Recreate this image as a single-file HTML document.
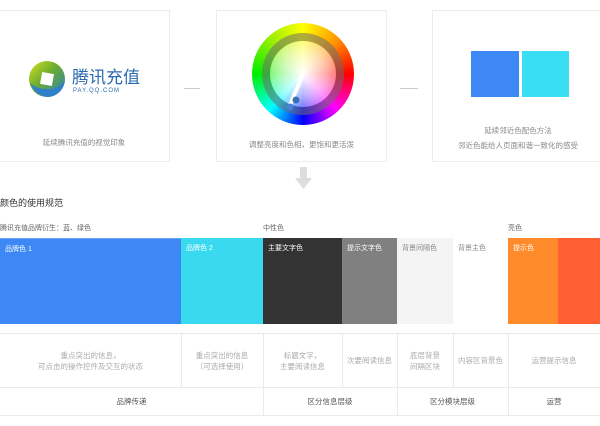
<!DOCTYPE html>
<html><head><meta charset="utf-8"><style>
*{margin:0;padding:0;box-sizing:border-box}
body{width:600px;height:426px;background:#fff;position:relative;overflow:hidden;font-family:"Liberation Sans","Noto Sans CJK SC",sans-serif;color:#999}
.a{position:absolute}
.card{position:absolute;top:10px;height:152px;border:1px solid #ececec;background:#fff}
.cap{position:absolute;left:0;right:0;text-align:center;font-size:7.5px;color:#888;line-height:15px}
.bar{position:absolute;top:238px;height:86px;font-size:7px;color:#fff;padding:5px 5px}
.vl{position:absolute;width:1px;background:#eaeaea}
.d{position:absolute;top:334px;height:53px;display:flex;align-items:center;justify-content:center;text-align:center;font-size:7.5px;line-height:11px;color:#aaa}
.l{position:absolute;top:388px;height:27px;display:flex;align-items:center;justify-content:center;font-size:7.5px;color:#555}
</style></head><body>
<div class="card" style="left:-2px;width:172px">
  <svg class="a" style="left:28px;top:48px" width="40" height="40" viewBox="0 0 40 40">
    <defs><linearGradient id="g1" x1="0" y1="0" x2="1" y2="1"><stop offset="0" stop-color="#d8e020"/><stop offset="0.45" stop-color="#6aab30"/><stop offset="1" stop-color="#2a7fc0"/></linearGradient></defs>
    <circle cx="20" cy="20" r="18" fill="url(#g1)"/>
    <path d="M3 24 Q8 37 22 38 Q35 36 38 22 Q30 31 18 30 Q8 29 3 24 Z" fill="#2f80c8"/>
    <rect x="14" y="14" width="12" height="12" fill="#fff" transform="rotate(10 20 20)"/>
  </svg>
  <div class="a" style="left:73px;top:55px;font-size:17px;color:#2a6ab0;font-family:'Noto Sans CJK SC',sans-serif;line-height:20px">腾讯充值</div>
  <div class="a" style="left:74px;top:77px;font-size:6px;color:#2a6ab0;letter-spacing:1px">PAY.QQ.COM</div>
  <div class="cap" style="top:124px">延续腾讯充值的视觉印象</div>
</div>
<div class="a" style="left:184px;top:88px;width:16px;height:1px;background:#ccc"></div>
<div class="card" style="left:216px;width:171px">
  <div class="a" style="left:35px;top:12px;width:102px;height:102px;border-radius:50%;background:conic-gradient(from 0deg,#ff0,#f90 12%,#f00 25%,#f0f 38%,#00f 50%,#0ff 62%,#0e0 75%,#9e0 88%,#ff0)"></div>
  <div class="a" style="left:45px;top:22px;width:82px;height:82px;border-radius:50%;border:8px solid rgba(110,110,110,.55)"></div>
  <div class="a" style="left:53px;top:30px;width:66px;height:66px;border-radius:50%;background:radial-gradient(circle,#fff 0%,rgba(255,255,255,.7) 45%,rgba(255,255,255,.25) 100%)"></div>
  <svg class="a" style="left:35px;top:12px" width="102" height="102"><line x1="51" y1="51" x2="38" y2="82" stroke="#fff" stroke-width="4"/><circle cx="44" cy="77" r="3.5" fill="#3a6fb0"/><circle cx="38" cy="84" r="3.5" fill="#4a7fd8"/></svg>
  <div class="cap" style="top:126px">调整亮度和色相，更饱和更活泼</div>
</div>
<div class="a" style="left:400px;top:88px;width:18px;height:1px;background:#ccc"></div>
<div class="card" style="left:432px;width:172px">
  <div class="a" style="left:38px;top:40px;width:48px;height:46px;background:#3d88f5"></div>
  <div class="a" style="left:89px;top:40px;width:47px;height:46px;background:#39def4"></div>
  <div class="cap" style="top:112px">延续邻近色配色方法<br>邻近色能给人页面和谐一致化的感受</div>
</div>
<svg class="a" style="left:295px;top:167px" width="17" height="24"><rect x="5" y="0" width="7" height="12" fill="#ddd"/><path d="M0 11 L17 11 L8.5 22 Z" fill="#ddd"/></svg>
<div class="a" style="left:0;top:196px;font-size:9px;color:#333">颜色的使用规范</div>
<div class="a" style="left:0;top:223px;font-size:7px;color:#666">腾讯充值品牌衍生：蓝、绿色</div>
<div class="a" style="left:263px;top:223px;font-size:7px;color:#666">中性色</div>
<div class="a" style="left:508px;top:223px;font-size:7px;color:#666">亮色</div>
<div class="bar" style="left:0;width:181px;background:#3d88f5;border-top:1px solid #6fa8f8">品牌色 1</div>
<div class="bar" style="left:181px;width:82px;background:#39daf0">品牌色 2</div>
<div class="bar" style="left:263px;width:79px;background:#333">主要文字色</div>
<div class="bar" style="left:342px;width:55px;background:#808080">提示文字色</div>
<div class="bar" style="left:397px;width:56px;background:#f4f4f4;color:#888">背景间隔色</div>
<div class="bar" style="left:453px;width:55px;background:#fff;color:#888">背景主色</div>
<div class="bar" style="left:508px;width:50px;background:#ff8a2a">提示色</div>
<div class="bar" style="left:558px;width:42px;background:#ff5f33"></div>
<div class="a" style="left:0;top:333px;width:600px;height:1px;background:#eaeaea"></div>
<div class="a" style="left:0;top:387px;width:600px;height:1px;background:#eaeaea"></div>
<div class="a" style="left:0;top:415px;width:600px;height:1px;background:#eaeaea"></div>
<div class="vl" style="left:181px;top:334px;height:53px"></div>
<div class="vl" style="left:263px;top:334px;height:81px"></div>
<div class="vl" style="left:342px;top:334px;height:53px"></div>
<div class="vl" style="left:397px;top:334px;height:81px"></div>
<div class="vl" style="left:453px;top:334px;height:53px"></div>
<div class="vl" style="left:508px;top:334px;height:81px"></div>
<div class="d" style="left:0;width:181px">重点突出的信息，<br>可点击的操作控件及交互的状态</div>
<div class="d" style="left:181px;width:82px">重点突出的信息<br>（可选择使用）</div>
<div class="d" style="left:263px;width:79px">标题文字，<br>主要阅读信息</div>
<div class="d" style="left:342px;width:55px">次要阅读信息</div>
<div class="d" style="left:397px;width:56px">底层背景<br>间隔区块</div>
<div class="d" style="left:453px;width:55px">内容区背景色</div>
<div class="d" style="left:508px;width:92px">运营提示信息</div>
<div class="l" style="left:0;width:263px">品牌传递</div>
<div class="l" style="left:263px;width:134px">区分信息层级</div>
<div class="l" style="left:397px;width:111px">区分模块层级</div>
<div class="l" style="left:508px;width:92px">运营</div>
</body></html>
